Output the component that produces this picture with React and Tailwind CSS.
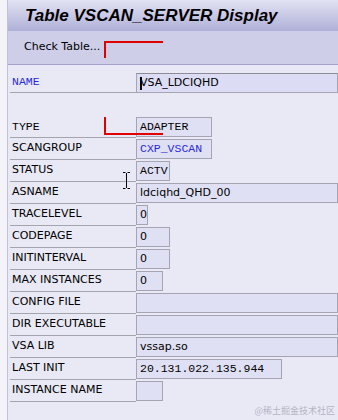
import React from "react";

const SANS = { fontFamily: '"DejaVu Sans", Verdana, sans-serif' };
const MONO = { fontFamily: '"Liberation Mono", "Courier New", monospace' };

function Row({ label, mono, labelBlue, w, value, vMono, vBlue, first, extra }) {
  return (
    <div className="flex h-[22px] items-start">
      <div
        className={`w-[126px] h-[22px] border-b border-[#a4a4ac] flex items-center pl-[2px] text-[11px] ${labelBlue ? "text-[#2a2ad8]" : "text-black"}`}
        style={mono ? { ...MONO, fontSize: "11.5px" } : SANS}
      >
        {label}
      </div>
      <div
        className={`${first ? "mt-[2px] bg-[#dcdcf4] border-t-[#8c8c98]" : "mt-[1px] bg-[#e0e0f4]"} h-[20px] border border-[#a4a4b4] ${w} flex items-center pl-[3px] whitespace-nowrap overflow-hidden ${vBlue ? "text-[#2a2ad8]" : "text-black"}`}
        style={vMono ? { ...MONO, fontSize: "11.5px" } : { ...SANS, fontSize: "11px" }}
      >
        {extra}
        {value}
      </div>
    </div>
  );
}

export default function App() {
  return (
    <div className="relative w-[338px] h-[420px] overflow-hidden bg-[#f3f3f9] flex">
      <div className="w-[7px] shrink-0" />
      <div className="flex-1 flex flex-col border-l border-[#c4c4d8] min-w-0">
        <div className="h-[31px] shrink-0 bg-gradient-to-b from-[#e2e2f2] to-[#b0b0d8] flex items-center pl-[17px]">
          <span
            className="text-[17px] font-bold italic text-black whitespace-nowrap"
            style={{ fontFamily: '"Liberation Sans", Arial, sans-serif' }}
          >
            Table VSCAN_SERVER Display
          </span>
        </div>
        <div className="h-[34px] shrink-0 bg-[#cecee9] border-b border-[#a2a2cc] flex items-center pl-[16px]">
          <span className="text-[11px] text-black" style={SANS}>
            Check Table...
          </span>
        </div>
        <div className="flex-1 bg-[#e9e9f5] pt-[6px] pl-[2px]">
          <Row
            label="NAME"
            mono
            labelBlue
            first
            w="flex-1"
            value="VSA_LDCIQHD"
            extra={<span className="w-[2px] h-[13px] bg-black mr-[-2px] shrink-0" />}
          />
          <div className="h-[23px]" />
          <Row label="TYPE" mono w="w-[76px]" value="ADAPTER" vMono />
          <Row label="SCANGROUP" w="w-[76px]" value="CXP_VSCAN" vMono vBlue />
          <Row label="STATUS" w="w-[34px]" value="ACTV" vMono />
          <Row label="ASNAME" w="flex-1" value="ldciqhd_QHD_00" />
          <Row label="TRACELEVEL" w="w-[12px]" value="0" />
          <Row label="CODEPAGE" w="w-[34px]" value="0" />
          <Row label="INITINTERVAL" w="w-[34px]" value="0" />
          <Row label="MAX INSTANCES" w="w-[27px]" value="0" />
          <Row label="CONFIG FILE" w="flex-1" value="" />
          <Row label="DIR EXECUTABLE" w="flex-1" value="" />
          <Row label="VSA LIB" w="flex-1" value="vssap.so" />
          <Row label="LAST INIT" w="w-[146px]" value="20.131.022.135.944" vMono />
          <Row label="INSTANCE NAME" w="w-[27px]" value="" />
        </div>
      </div>

      {/* red markers */}
      <div className="absolute left-[104px] top-[41px] w-[59px] h-[2px] bg-[#e00000]" />
      <div className="absolute left-[104px] top-[41px] w-[2px] h-[17px] bg-[#e00000]" />
      <div className="absolute left-[104px] top-[117px] w-[2px] h-[17px] bg-[#e00000]" />
      <div className="absolute left-[104px] top-[133px] w-[59px] h-[2px] bg-[#e00000]" />

      {/* I-beam cursor */}
      <svg className="absolute left-[122px] top-[172px]" width="9" height="17" viewBox="0 0 9 17">
        <path d="M1 0.5H3.5M5.5 0.5H8M4.5 1V16M1 16.5H3.5M5.5 16.5H8" stroke="#000" strokeWidth="1" fill="none" />
      </svg>

      <div
        className="absolute right-[3px] bottom-[3px] text-[9px] text-[#b4b4c4]"
        style={{ fontFamily: '"Noto Sans CJK SC", sans-serif' }}
      >
        @稀土掘金技术社区
      </div>
    </div>
  );
}
